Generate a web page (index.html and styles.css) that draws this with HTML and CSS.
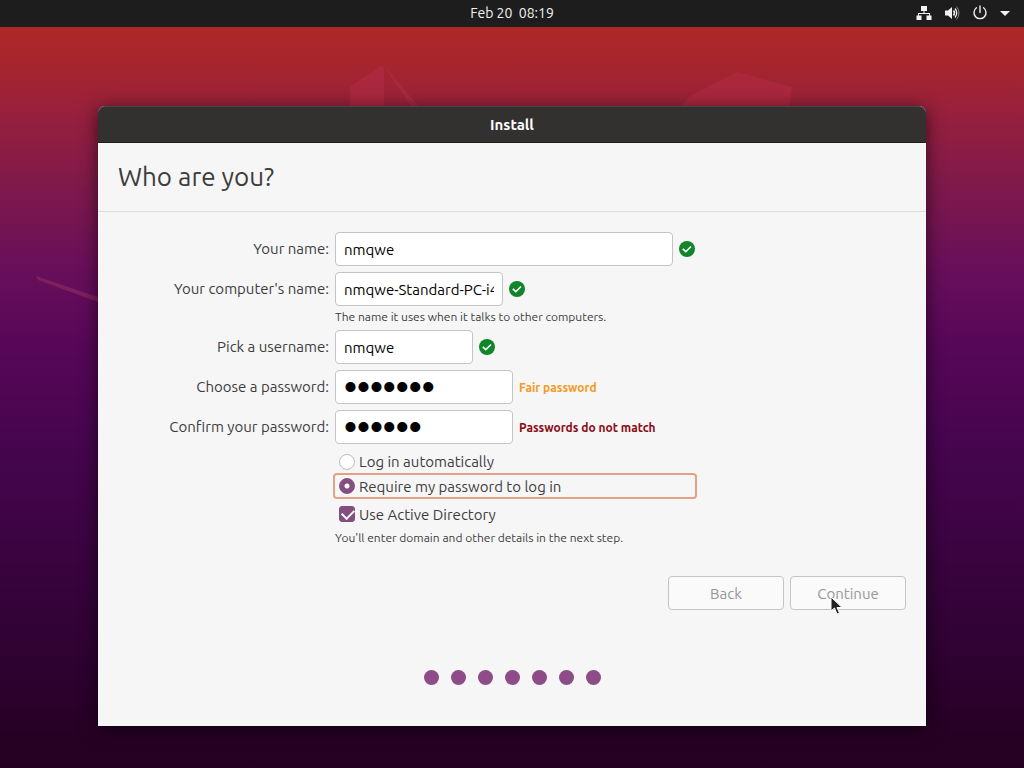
FILE: index.html
```html
<!DOCTYPE html>
<html lang="en">
<head>
  <meta charset="UTF-8">
  <meta name="viewport" content="width=device-width, initial-scale=1.0">
  <title>Install</title>
  <link rel="stylesheet" href="styles.css">
</head>
<body>
  <svg class="wallpaper" viewBox="0 0 1024 768" preserveAspectRatio="none" aria-hidden="true">
    <path d="M350 87 L382 65 L384 68 V120 H350 Z" fill="#b02c46" opacity=".6"/>
    <path d="M384 66 L388 70 L420 108 H412 Z" fill="#b02c46" opacity=".6"/>
    <path d="M680 106 L690 96 L737 72 L792 87 L788 120 H680 Z" fill="#b02c42" opacity=".6"/>
    <path d="M36 276 L98 297 V302 L38 280 Z" fill="#84245f" opacity=".8"/>
  </svg>

  <header class="topbar">
    <time class="clock">Feb 20 &nbsp;08:19</time>
    <div class="tray">
      <svg width="16" height="16" viewBox="0 0 16 16" fill="#f2f2f2">
        <path d="M5 1h6v5H8.500v2H14v2.500h1.500V15h-5v-4.500H13V9H3v1.500h2.500V15h-5v-4.500H2V8h5.500V6H5z"/>
      </svg>
      <svg width="16" height="16" viewBox="0 0 16 16" fill="none" stroke="#f2f2f2">
        <path d="M1 5.500h3L8 2v12L4 10.500H1z" fill="#f2f2f2" stroke="none"/>
        <path d="M9.500 5.500q2 2.500 0 5" stroke-width="1.500"/>
        <path d="M11 3.500q3.500 4.500 0 9" stroke-width="1.300"/>
        <path d="M12.500 1.500q5 6.500 0 13" stroke-width="1" opacity=".5"/>
      </svg>
      <svg width="16" height="16" viewBox="0 0 16 16" fill="none" stroke="#f2f2f2" stroke-width="1.400" stroke-linecap="round">
        <path d="M4.500 2.800a6 6 0 1 0 7 0M8 1v6.500"/>
      </svg>
      <svg width="10" height="16" viewBox="0 0 10 16" fill="#f2f2f2">
        <path d="M0 6h10L5 11z"/>
      </svg>
    </div>
  </header>

  <main class="desktop">
    <section class="window">
      <div class="titlebar">Install</div>
      <h1>Who are you?</h1>

      <form class="form">
        <label class="name" for="fullname">Your name:</label>
        <div class="field">
          <input class="entry wide" type="text" id="fullname" value="nmqwe">
          <svg class="ok" viewBox="0 0 16 16"><circle cx="8" cy="8" r="8" fill="#12852a"/><path d="M3.800 7.800l3 2.900 5.200-5.200" fill="none" stroke="#fff" stroke-width="1.600"/></svg>
        </div>

        <label class="name" for="host">Your computer's name:</label>
        <div class="field with-hint">
          <input class="entry host" type="text" id="host" value="nmqwe-Standard-PC-i440">
          <svg class="ok" viewBox="0 0 16 16"><circle cx="8" cy="8" r="8" fill="#12852a"/><path d="M3.800 7.800l3 2.900 5.200-5.200" fill="none" stroke="#fff" stroke-width="1.600"/></svg>
        </div>
        <p class="hint">The name it uses when it talks to other computers.</p>

        <label class="name" for="username">Pick a username:</label>
        <div class="field">
          <input class="entry user" type="text" id="username" value="nmqwe">
          <svg class="ok" viewBox="0 0 16 16"><circle cx="8" cy="8" r="8" fill="#12852a"/><path d="M3.800 7.800l3 2.900 5.200-5.200" fill="none" stroke="#fff" stroke-width="1.600"/></svg>
        </div>

        <label class="name" for="password">Choose a password:</label>
        <div class="field">
          <input class="entry secret" type="password" id="password" value="nmqwe12">
          <span class="note fair">Fair password</span>
        </div>

        <label class="name" for="confirm">Confirm your password:</label>
        <div class="field">
          <input class="entry secret" type="password" id="confirm" value="nmqwe1">
          <span class="note error">Passwords do not match</span>
        </div>

        <div class="choices">
          <label class="choice first"><input type="radio" name="login" value="auto"> Log in automatically</label>
          <label class="choice focused"><input type="radio" name="login" value="password" checked> Require my password to log in</label>
          <label class="choice last"><input type="checkbox" name="ad" checked> Use Active Directory</label>
        </div>
        <p class="hint">You'll enter domain and other details in the next step.</p>
      </form>

      <div class="actions">
        <button type="button" disabled>Back</button>
        <button type="button" disabled>Continue</button>
        <svg class="cursor" width="13" height="20" viewBox="0 0 13 20" aria-hidden="true">
          <path d="M1 1v14l3.500-3 2.500 6 2.500-1-2.500-5.500H12z" fill="#222" stroke="#fff" stroke-width="1"/>
        </svg>
      </div>

      <div class="steps">
        <span></span><span></span><span></span><span></span><span></span><span></span><span></span>
      </div>
    </section>
  </main>
</body>
</html>
```
FILE: styles.css
```css
* {
  box-sizing: border-box;
}

body {
  margin: 0;
  min-height: 100vh;
  display: flex;
  flex-direction: column;
  font-family: Ubuntu, "Noto Sans", sans-serif;
  font-size: 15px;
  color: #3d3d3d;
  background: linear-gradient(to bottom, #ad2828 4%, #a5252f 9%, #96203d 15%, #7d194c 25%, #680f5a 35%, #570758 45%, #46054e 58%, #3a0440 72%, #2c022e 88%, #240020 100%);
}

.wallpaper {
  position: absolute;
  top: 0;
  left: 0;
  width: 100%;
  height: 100%;
}

/* top bar */
.topbar {
  position: relative;
  display: grid;
  grid-template-columns: 1fr auto 1fr;
  align-items: center;
  height: 27px;
  padding: 0 14px 2px;
  background: #1d1d1d;
  font-size: 14px;
  color: #f2f2f2;
}

.clock {
  grid-column: 2;
}

.tray {
  display: flex;
  justify-content: flex-end;
  align-items: center;
  gap: 12px;
}

/* installer window */
.desktop {
  position: relative;
  flex: 1;
  display: flex;
  padding: 79px 98px 42px;
}

.window {
  flex: 1;
  display: flex;
  flex-direction: column;
  background: #f6f6f6;
  border-radius: 7px 7px 0 0;
  box-shadow: 0 3px 18px rgba(0, 0, 0, 0.6);
}

.titlebar {
  height: 37px;
  line-height: 36px;
  text-align: center;
  font-weight: bold;
  color: #fff;
  background: #333130;
  border-top: 1px solid #484544;
  border-bottom: 1px solid #1f1e1d;
  border-radius: 7px 7px 0 0;
}

h1 {
  margin: 0;
  padding: 16px 20px;
  font-size: 26px;
  font-weight: normal;
  line-height: 36px;
  border-bottom: 1px solid #dcdcdc;
}

/* form */
.form {
  display: grid;
  grid-template-columns: 211px 1fr;
  column-gap: 6px;
  padding: 20px 20px 0;
}

.name {
  text-align: right;
  line-height: 34px;
}

.field {
  grid-column: 2;
  display: flex;
  align-items: center;
  gap: 6px;
  margin-bottom: 6px;
}

.with-hint {
  margin-bottom: 0;
}

.with-hint + .hint {
  margin: 2px 0 4px;
}

.entry {
  height: 34px;
  padding: 0 8px;
  border: 1px solid #c4c4c4;
  border-radius: 4px;
  background: #fff;
  font-family: inherit;
  font-size: 15px;
  color: #000;
}

.wide {
  width: 338px;
}

.host {
  width: 168px;
}

.user {
  width: 138px;
}

/* large type for the password bullets */
.secret {
  width: 178px;
  font-family: "Liberation Sans", sans-serif;
  font-size: 37px;
}

.ok {
  width: 16px;
  height: 16px;
}

.note {
  font-size: 12px;
  font-weight: bold;
}

.fair {
  color: #f59a23;
}

.error {
  color: #8b0a14;
}

.hint {
  grid-column: 2;
  margin: 0;
  font-size: 12px;
  line-height: 18px;
}

.choices {
  grid-column: 2;
  justify-self: start;
  width: 364px;
  margin-left: -2px;
}

.choice {
  display: flex;
  align-items: center;
  gap: 4px;
  height: 26px;
  padding: 0 4px;
  border: 2px solid transparent;
}

.first {
  height: 23px;
}

.last {
  height: 30px;
}

.focused {
  border-color: #e3a283;
  border-radius: 4px;
}

.choice input {
  appearance: none;
  flex: none;
  width: 16px;
  height: 16px;
  margin: 0;
  border: 1px solid #bdbdbd;
  border-radius: 50%;
  background: #fff;
}

.choice input[type="radio"]:checked {
  border-color: #844f80;
  background: radial-gradient(circle, #fff 2px, #844f80 3px);
}

.choice input[type="checkbox"] {
  position: relative;
  border-color: #844f80;
  border-radius: 3px;
  background: #844f80;
}

.choice input[type="checkbox"]::after {
  content: "";
  position: absolute;
  top: 2px;
  left: 2px;
  width: 10px;
  height: 6px;
  border-left: 2px solid #fff;
  border-bottom: 2px solid #fff;
  transform: rotate(-45deg);
}

/* buttons */
.actions {
  position: relative;
  display: flex;
  justify-content: flex-end;
  gap: 6px;
  padding: 29px 20px 0;
}

button {
  width: 116px;
  height: 34px;
  border: 1px solid #c4c4c4;
  border-radius: 4px;
  background: #fafafa;
  font-family: inherit;
  font-size: 15px;
  color: #979797;
}

.cursor {
  position: absolute;
  right: 83px;
  bottom: -6px;
}

.steps {
  display: flex;
  justify-content: center;
  gap: 12px;
  padding: 60px 0 40px;
}

.steps span {
  width: 15px;
  height: 15px;
  border-radius: 50%;
  background: #8d4b88;
}
```
